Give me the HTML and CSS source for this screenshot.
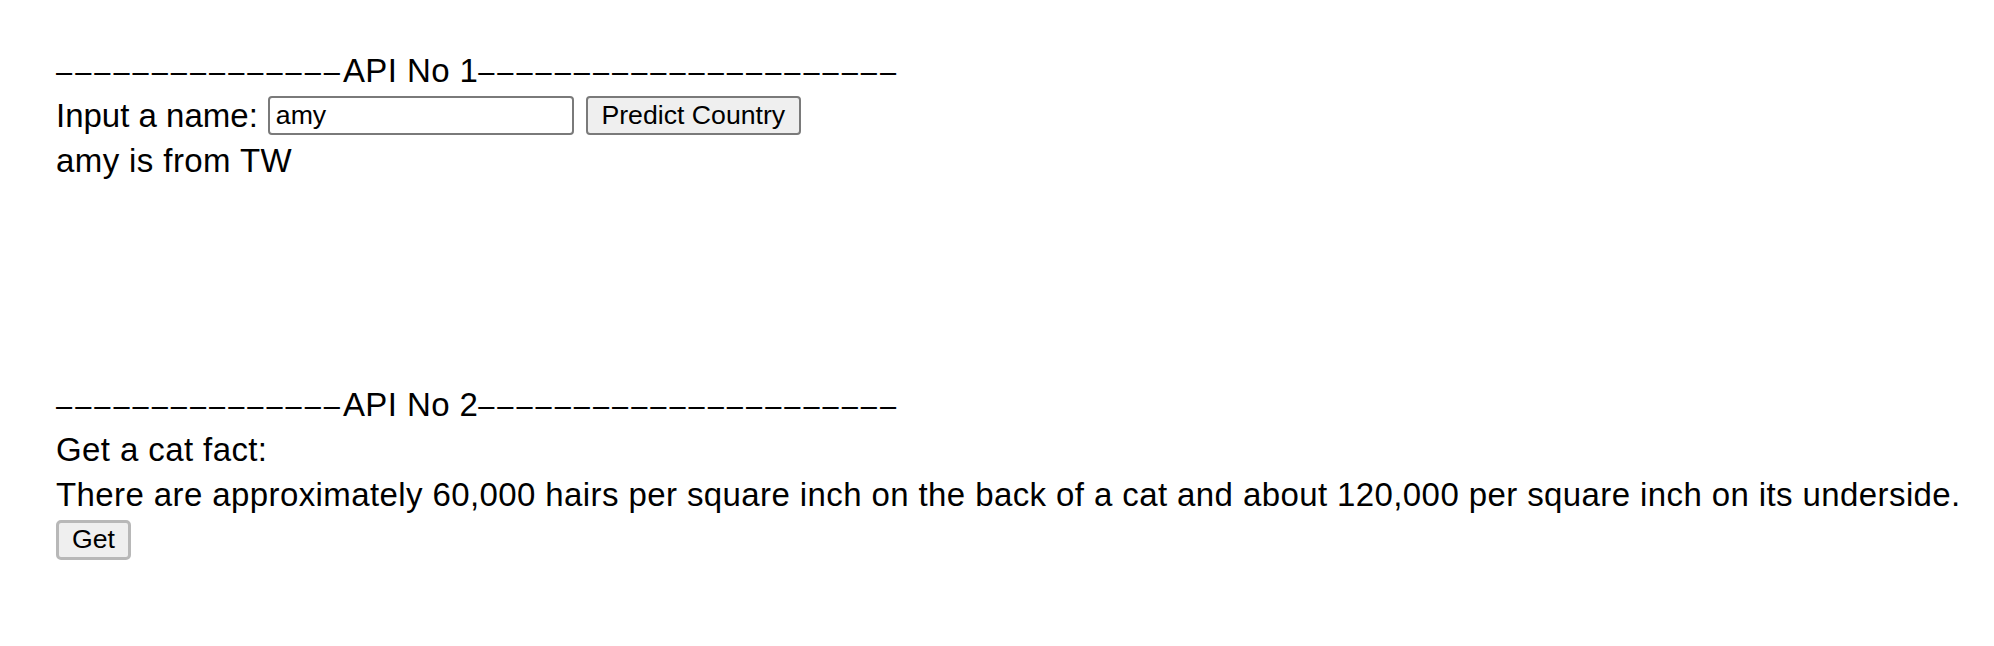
FILE: index.html
```html
<!DOCTYPE html>
<html>
<head>
<meta charset="utf-8">
<title>API Demo</title>
<link rel="stylesheet" href="styles.css">
</head>
<body>
<div class="page">
  <section class="api api-one">
    <div class="title"><span class="dash">–––––––––––––––</span>API No 1<span class="dash">––––––––––––––––––––––</span></div>
    <div class="row">
      <label class="label" for="name">Input a name:</label>
      <input class="field" id="name" type="text" value="amy">
      <button class="btn btn-predict" type="button">Predict Country</button>
    </div>
    <div class="line">amy is from TW</div>
  </section>
  <section class="api api-two">
    <div class="title"><span class="dash">–––––––––––––––</span>API No 2<span class="dash">––––––––––––––––––––––</span></div>
    <div class="line">Get a cat fact:</div>
    <div class="line">There are approximately 60,000 hairs per square inch on the back of a cat and about 120,000 per square inch on its underside.</div>
    <div class="btn-row">
      <button class="btn btn-get" type="button">Get</button>
    </div>
  </section>
</div>
</body>
</html>
```

FILE: styles.css
```css
html, body {
  margin: 0;
  padding: 0;
  background: #ffffff;
}

.page {
  padding: 48px 56px;
  font-family: "Liberation Sans", Arial, sans-serif;
  font-size: 33px;
  letter-spacing: 0.4px;
  color: #000000;
}

.title,
.line {
  line-height: 45px;
  height: 45px;
  white-space: nowrap;
}

.dash {
  font-size: 29px;
  letter-spacing: 3px;
}

.row {
  display: flex;
  align-items: center;
  height: 45px;
}

.label {
  letter-spacing: 0;
  margin-right: 10px;
}

.field {
  box-sizing: border-box;
  width: 306px;
  height: 39px;
  margin: 0;
  padding: 2px 6px;
  border: 2px solid #7a7a7a;
  border-radius: 4px;
  font-family: "Liberation Sans", Arial, sans-serif;
  font-size: 26.67px;
  letter-spacing: 0;
  color: #000000;
  background: #ffffff;
}

.btn {
  box-sizing: border-box;
  height: 39px;
  margin: 0;
  padding: 0 13px;
  background: #efefef;
  border: 2px solid #7a7a7a;
  border-radius: 4px;
  font-family: "Liberation Sans", Arial, sans-serif;
  font-size: 26.67px;
  letter-spacing: 0;
  color: #000000;
}

.btn-predict {
  margin-left: 12px;
  width: 215px;
}

.api-two {
  margin-top: 199px;
}

.btn-row {
  padding-top: 1px;
}

.btn-get {
  width: 75px;
  height: 40px;
  border: 3px solid #b8b8b8;
  border-radius: 5px;
  padding: 0;
}
```
